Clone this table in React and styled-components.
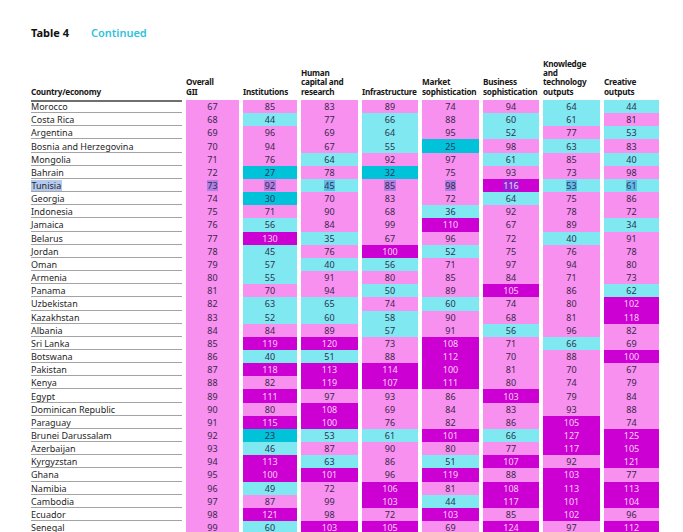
import React from 'react';
import styled, { createGlobalStyle } from 'styled-components';

const GlobalStyle = createGlobalStyle`
  html, body { margin: 0; padding: 0; background: #fff; }
  body { font-family: "Noto Sans", "Open Sans", sans-serif; }
`;

const Page = styled.div`
  box-sizing: border-box;
  width: 683px;
  height: 532px;
  overflow: hidden;
  padding: 25px 0 0 31px;
`;

const Title = styled.h1`
  margin: 0;
  display: flex;
  font-size: 11px;
  line-height: 15px;
  height: 15px;
`;

const TableNo = styled.span`
  width: 60px;
  font-weight: 700;
  color: #111;
`;

const Continued = styled.span`
  font-weight: 600;
  color: #2cc3dc;
`;

const Grid = styled.div`
  display: grid;
  grid-template-columns: 151px 53px 54px 57px 56px 57px 56px 57px 55px;
  column-gap: 4px;
  grid-template-rows: 60px;
  grid-auto-rows: 13.16px;
`;

const HeadCell = styled.div`
  align-self: end;
  padding-bottom: 4px;
  font-size: 8.2px;
  line-height: 9.3px;
  font-weight: 700;
  letter-spacing: -0.25px;
  color: #161616;
  white-space: nowrap;
`;

const CountryHead = styled(HeadCell)`
  border-bottom: 2px solid #6f6f6f;
  margin-bottom: -2px;
  position: relative;
  z-index: 1;
`;

const CountryCell = styled.div`
  box-sizing: border-box;
  display: flex;
  align-items: center;
  border-bottom: 1px solid #a3a3a3;
  font-size: 9px;
  line-height: 11px;
  color: #262626;
  white-space: nowrap;
  padding-top: 1px;
`;

const tiers = {
  D: { bg: '#00c2d8', fg: '#24365a' },
  C: { bg: '#80e8f0', fg: '#2c3350' },
  P: { bg: '#f790ef', fg: '#3a2749' },
  M: { bg: '#cc00d2', fg: '#fad0f8' },
};

const tierOf = (v) => (v <= 33 ? 'D' : v <= 66 ? 'C' : v <= 99 ? 'P' : 'M');

const ValueCell = styled.div`
  display: flex;
  align-items: center;
  justify-content: center;
  font-size: 9px;
  line-height: 11px;
  background: ${(p) => tiers[p.$tier].bg};
  color: ${(p) => tiers[p.$tier].fg};
`;

const Sel = styled.span`
  background: rgba(40, 100, 210, 0.35);
  padding: 0 0.5px;
`;

const headers = [
  ['Overall', 'GII'],
  ['Institutions'],
  ['Human', 'capital and', 'research'],
  ['Infrastructure'],
  ['Market', 'sophistication'],
  ['Business', 'sophistication'],
  ['Knowledge', 'and', 'technology', 'outputs'],
  ['Creative', 'outputs'],
];

const rows = [
  ['Morocco', 67, 85, 83, 89, 74, 94, 64, 44],
  ['Costa Rica', 68, 44, 77, 66, 88, 60, 61, 81],
  ['Argentina', 69, 96, 69, 64, 95, 52, 77, 53],
  ['Bosnia and Herzegovina', 70, 94, 67, 55, 25, 98, 63, 83],
  ['Mongolia', 71, 76, 64, 92, 97, 61, 85, 40],
  ['Bahrain', 72, 27, 78, 32, 75, 93, 73, 98],
  ['Tunisia', 73, 92, 45, 85, 98, 116, 53, 61],
  ['Georgia', 74, 30, 70, 83, 72, 64, 75, 86],
  ['Indonesia', 75, 71, 90, 68, 36, 92, 78, 72],
  ['Jamaica', 76, 56, 84, 99, 110, 67, 89, 34],
  ['Belarus', 77, 130, 35, 67, 96, 72, 40, 91],
  ['Jordan', 78, 45, 76, 100, 52, 75, 76, 78],
  ['Oman', 79, 57, 40, 56, 71, 97, 94, 80],
  ['Armenia', 80, 55, 91, 80, 85, 84, 71, 73],
  ['Panama', 81, 70, 94, 50, 89, 105, 86, 62],
  ['Uzbekistan', 82, 63, 65, 74, 60, 74, 80, 102],
  ['Kazakhstan', 83, 52, 60, 58, 90, 68, 81, 118],
  ['Albania', 84, 84, 89, 57, 91, 56, 96, 82],
  ['Sri Lanka', 85, 119, 120, 73, 108, 71, 66, 69],
  ['Botswana', 86, 40, 51, 88, 112, 70, 88, 100],
  ['Pakistan', 87, 118, 113, 114, 100, 81, 70, 67],
  ['Kenya', 88, 82, 119, 107, 111, 80, 74, 79],
  ['Egypt', 89, 111, 97, 93, 86, 103, 79, 84],
  ['Dominican Republic', 90, 80, 108, 69, 84, 83, 93, 88],
  ['Paraguay', 91, 115, 100, 76, 82, 86, 105, 74],
  ['Brunei Darussalam', 92, 23, 53, 61, 101, 66, 127, 125],
  ['Azerbaijan', 93, 46, 87, 90, 80, 77, 117, 105],
  ['Kyrgyzstan', 94, 113, 63, 86, 51, 107, 92, 121],
  ['Ghana', 95, 100, 101, 96, 119, 88, 103, 77],
  ['Namibia', 96, 49, 72, 106, 81, 108, 113, 113],
  ['Cambodia', 97, 87, 99, 103, 44, 117, 101, 104],
  ['Ecuador', 98, 121, 98, 72, 103, 85, 102, 96],
  ['Senegal', 99, 60, 103, 105, 69, 124, 97, 112],
];

const SELECTED = 'Tunisia';

export default function App() {
  return (
    <>
      <GlobalStyle />
      <Page>
        <Title>
          <TableNo>Table 4</TableNo>
          <Continued>Continued</Continued>
        </Title>
        <Grid>
          <CountryHead>Country/economy</CountryHead>
          {headers.map((lines, i) => (
            <HeadCell key={i}>
              {lines.map((l, j) => (
                <React.Fragment key={j}>
                  {j > 0 && <br />}
                  {l}
                </React.Fragment>
              ))}
            </HeadCell>
          ))}
          {rows.map(([name, ...vals]) => {
            const sel = name === SELECTED;
            return (
              <React.Fragment key={name}>
                <CountryCell>{sel ? <Sel>{name}</Sel> : name}</CountryCell>
                {vals.map((v, k) => (
                  <ValueCell key={k} $tier={tierOf(v)}>
                    {sel ? <Sel>{v}</Sel> : v}
                  </ValueCell>
                ))}
              </React.Fragment>
            );
          })}
        </Grid>
      </Page>
    </>
  );
}
